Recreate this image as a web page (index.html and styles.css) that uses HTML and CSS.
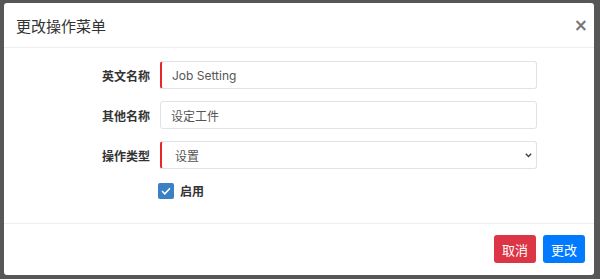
FILE: index.html
```html
<!DOCTYPE html>
<html lang="zh">

<head>
    <meta charset="UTF-8">
    <meta name="viewport" content="width=device-width, initial-scale=1.0">
    <title>更改操作菜单</title>
    <link rel="stylesheet" href="styles.css">
</head>

<body>
    <div class="modal">
        <div class="modal-header">
            <h4 class="modal-title">更改操作菜单</h4>
            <span class="close">&times;</span>
        </div>
        <div class="modal-body">
            <label class="lbl">英文名称</label>
            <input class="field required" type="text" value="Job Setting">
            <label class="lbl">其他名称</label>
            <input class="field" type="text" value="设定工件">
            <label class="lbl">操作类型</label>
            <div class="field required sel">
                <span>设置</span>
                <svg width="7" height="5" viewBox="0 0 7 5"><path d="M0.8 0.8l2.7 2.7L6.2 0.8" fill="none" stroke="#444" stroke-width="1.5"/></svg>
            </div>
            <span></span>
            <div class="check">
                <span class="box"><svg width="10" height="8" viewBox="0 0 10 8"><path d="M1 4l2.8 2.8L9 1.2" fill="none" stroke="#fff" stroke-width="1.5"/></svg></span>
                <b>启用</b>
            </div>
        </div>
        <div class="modal-footer">
            <button class="btn btn-red">取消</button>
            <button class="btn btn-blue">更改</button>
        </div>
    </div>
</body>

</html>
```

FILE: styles.css
```css
body {
    margin: 0;
    height: 279px;
    background-color: #575757;
    font-family: Inter, "Noto Sans CJK SC", sans-serif;
    padding: 3px 6px 0 4px;
    box-sizing: border-box;
}

.modal {
    width: 590px;
    height: 272px;
    background-color: #fff;
    border-radius: 3px;
    display: flex;
    flex-direction: column;
}

.modal-header {
    height: 44px;
    display: flex;
    align-items: center;
    justify-content: space-between;
    padding: 0 6px 0 12px;
    border-bottom: 1px solid #eceeef;
}

.modal-title {
    margin: 0;
    font-size: 15px;
    font-weight: 400;
    color: #333;
}

.close {
    font-size: 17px;
    font-weight: 700;
    color: #777;
    line-height: 1;
    font-family: "DejaVu Sans", sans-serif;
}

.modal-body {
    flex: 1;
    display: grid;
    grid-template-columns: 134px 377px;
    column-gap: 10px;
    row-gap: 12px;
    align-content: start;
    align-items: center;
    padding: 13px 0 0 12px;
}

.lbl {
    text-align: right;
    font-size: 12px;
    font-weight: 700;
    color: #333;
}

.field {
    box-sizing: border-box;
    height: 28px;
    width: 377px;
    border: 1px solid #dfe3e7;
    border-radius: 3px;
    padding: 0 10px;
    font-family: Inter, "Noto Sans CJK SC", sans-serif;
    font-size: 12px;
    color: #555;
    outline: none;
}

.required {
    border-left: 2px solid #e8262a;
}

.sel {
    display: flex;
    align-items: center;
    justify-content: space-between;
    padding: 0 4px 0 13px;
}

.check {
    display: flex;
    align-items: center;
    gap: 6px;
    margin-left: -2px;
    margin-top: 1px;
    font-size: 12px;
    color: #333;
}

.box {
    width: 16px;
    height: 16px;
    background-color: #3a80c4;
    border-radius: 2px;
    display: flex;
    align-items: center;
    justify-content: center;
}

.modal-footer {
    height: 50px;
    border-top: 1px solid #eceeef;
    display: flex;
    justify-content: flex-end;
    align-items: center;
    gap: 7px;
    padding: 0 9px 1px 0;
}

.btn {
    height: 28px;
    border: none;
    border-radius: 3px;
    padding: 0 8px;
    color: #fff;
    font-size: 13px;
    font-family: "Noto Sans CJK SC", sans-serif;
}

.btn-red {
    background-color: #dc3545;
}

.btn-blue {
    background-color: #007bff;
}
```
